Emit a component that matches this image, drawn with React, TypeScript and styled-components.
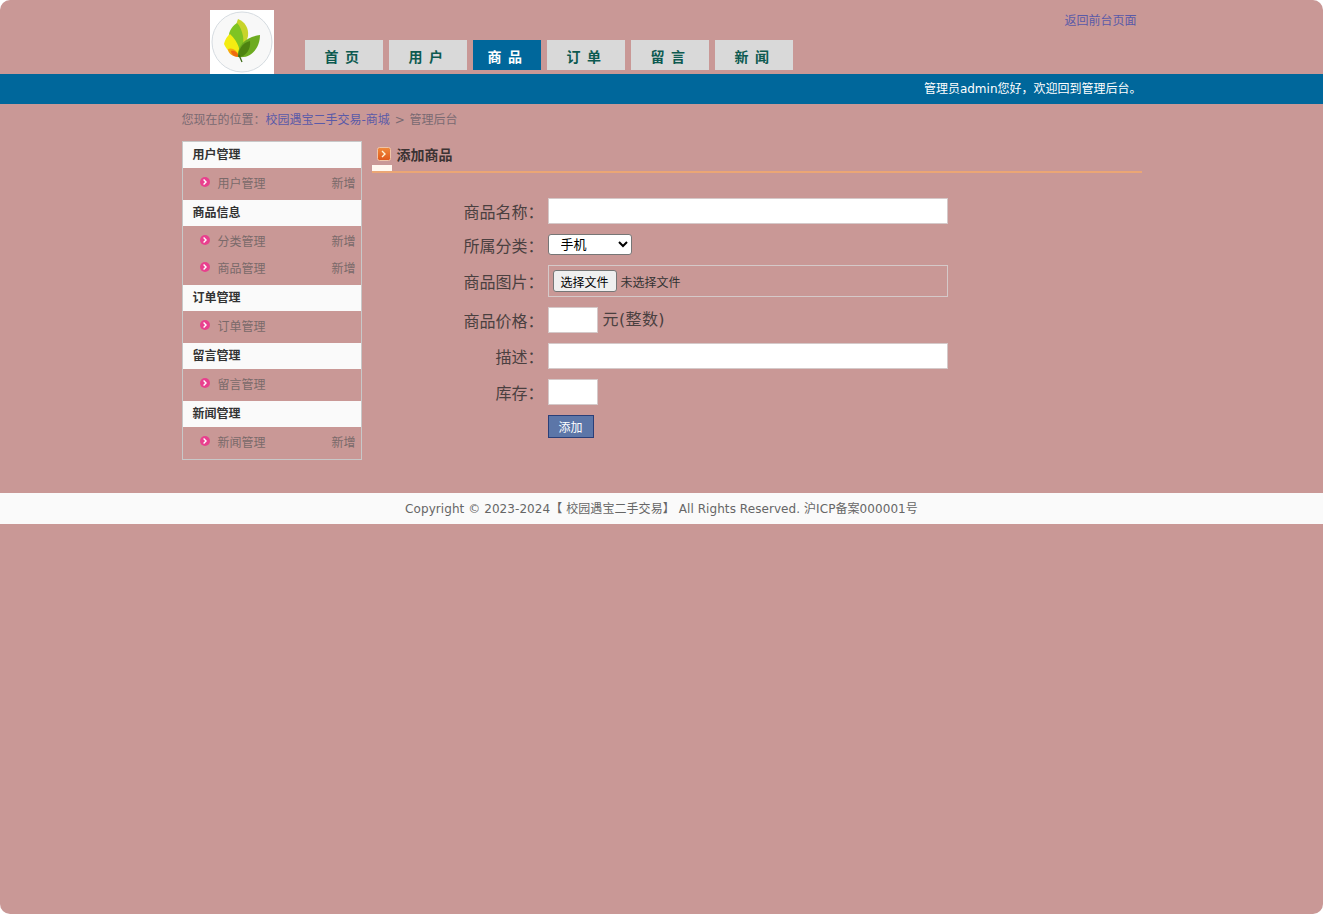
import React from "react";
import styled, { createGlobalStyle } from "styled-components";

const FONT = `"DejaVu Sans", "Noto Sans CJK SC", sans-serif`;

const Global = createGlobalStyle`
  html, body { margin: 0; padding: 0; height: 100%; background: #fff; }
  #root { min-height: 100%; }
  * { box-sizing: border-box; }
`;

const Page = styled.div`
  width: 1323px;
  height: 914px;
  overflow: hidden;
  background: #c99896;
  border-radius: 10px;
  font-family: ${FONT};
  font-size: 12px;
  color: #666;
`;

const Wrap = styled.div`
  width: 960px;
  margin: 0 auto;
`;

const Header = styled(Wrap)`
  height: 74px;
  display: flex;
  align-items: flex-end;
  padding-left: 28px;
  position: relative;
`;

const LogoBox = styled.div`
  width: 64px;
  height: 64px;
  background: #fff;
  display: flex;
`;

const Nav = styled.nav`
  display: flex;
  gap: 6px;
  margin-left: 31px;
  margin-bottom: 4px;
`;

const Tab = styled.a<{ $active?: boolean }>`
  width: ${(p) => (p.$active ? 68 : 78)}px;
  height: 30px;
  display: flex;
  align-items: center;
  justify-content: center;
  padding: 2px 2px 0 0;
  background: ${(p) => (p.$active ? "#00679b" : "#d9d9d9")};
  color: ${(p) => (p.$active ? "#fff" : "#0d5a50")};
  font-size: 14px;
  font-weight: bold;
  letter-spacing: 1.5px;
  word-spacing: -1.5px;
`;

const BackLink = styled.a`
  position: absolute;
  right: 5px;
  top: 11px;
  color: #5a5aa8;
  font-size: 12px;
`;

const Bar = styled.div`
  height: 30px;
  background: #00679b;
`;

const BarInner = styled(Wrap)`
  height: 30px;
  line-height: 31px;
  text-align: right;
  color: #fff;
  font-size: 12px;
`;

const Crumb = styled(Wrap)`
  height: 37px;
  padding-top: 8px;
  line-height: 16px;
  color: #7a6a72;
  word-spacing: 1px;
`;

const CrumbLink = styled.a`
  color: #5a5aa8;
`;

const Main = styled(Wrap)`
  display: flex;
  gap: 10px;
  align-items: flex-start;
`;

const Side = styled.aside`
  width: 180px;
  height: 319px;
  border: 1px solid #c8c8c8;
`;

const SideTitle = styled.div`
  height: 26px;
  line-height: 26px;
  padding-left: 10px;
  background: #fafafa;
  color: #333;
  font-weight: bold;
`;

const SideGroup = styled.div`
  padding: 1px 0 4px;
`;

const SideItem = styled.div`
  height: 27px;
  display: flex;
  align-items: center;
  padding-left: 17px;
  padding-right: 5px;
  color: #7a6a6a;
`;

const BulletSlot = styled.span`
  display: flex;
  margin-top: -1px;
`;

const SideLabel = styled.span`
  margin-left: 8px;
  flex: 1;
`;

const SideAdd = styled.span``;

const Content = styled.section`
  width: 770px;
`;

const ContentHead = styled.div`
  height: 32px;
  display: flex;
  align-items: center;
  padding-left: 5px;
  padding-bottom: 4px;
  border-bottom: 2px solid #eba675;
  position: relative;
  color: #3b3333;
  font-size: 14px;
  font-weight: bold;
`;

const HeadText = styled.span`
  margin-left: 6px;
`;

const WhiteTick = styled.span`
  position: absolute;
  left: 0;
  bottom: 0;
  width: 20px;
  height: 6px;
  background: #fff8f0;
`;

const Form = styled.form`
  padding-top: 25px;
  display: flex;
  flex-direction: column;
`;

const Row = styled.div<{ $h: number }>`
  display: grid;
  grid-template-columns: 172px 1fr;
  column-gap: 4px;
  height: ${(p) => p.$h}px;
  align-items: center;
`;

const Label = styled.label`
  text-align: right;
  font-size: 16px;
  color: #4a4040;
  white-space: nowrap;
`;

const Control = styled.div`
  display: flex;
  align-items: center;
`;

const Input = styled.input<{ $w: number }>`
  width: ${(p) => p.$w}px;
  height: 26px;
  border: 1px solid #d5c9c9;
  background: #fff;
  padding: 0;
  outline: none;
`;

const Select = styled.select`
  width: 84px;
  height: 21px;
  font-family: ${FONT};
  font-size: 13px;
  padding-left: 8px;
  background: #fff;
  border: 1px solid #767676;
  border-radius: 3px;
  color: #000;
`;

const FileBox = styled.div`
  width: 400px;
  height: 32px;
  border: 1px solid #d5c9c9;
  display: flex;
  align-items: center;
  padding-left: 4px;
  color: #333;
`;

const FileButton = styled.button`
  width: 64px;
  height: 22px;
  padding: 0;
  font-family: ${FONT};
  font-size: 12px;
  color: #000;
  background: #efefef;
  border: 1px solid #767676;
  border-radius: 3px;
  margin-right: 4px;
`;

const Unit = styled.span`
  font-size: 16px;
  color: #4a4040;
  margin-left: 5px;
  margin-top: -4px;
  letter-spacing: 0.4px;
`;

const Submit = styled.button`
  width: 46px;
  height: 23px;
  padding: 0;
  background: #5c76a8;
  border: 1px solid #2a3f78;
  color: #fff;
  font-family: ${FONT};
  font-size: 12px;
`;

const Footer = styled.footer`
  margin-top: 33px;
  height: 31px;
  line-height: 32px;
  background: #fafafa;
  text-align: center;
  color: #666;
  font-size: 12px;
  letter-spacing: 0.07px;
`;

const Logo = () => (
  <svg width="64" height="64" viewBox="0 0 64 64">
    <ellipse cx="32" cy="32" rx="30" ry="30" fill="#f8f8f8" stroke="#d5dbe0" />
    <path d="M28 9C35 12 39 18 38 26C37 31 35 35 32 38C26 30 24 18 28 9Z" fill="#c8d42a" />
    <path d="M27 13C21 17 18 23 19 29C20 36 25 42 29 46C33 40 34 32 33 26C32 21 30 16 27 13Z" fill="#7fc423" />
    <path d="M20 24C16 27 15 31 14 34C17 41 23 46 29 47C31 41 29 33 20 24Z" fill="#f4ec12" />
    <path d="M29 47C22 47 18 43 18 39C23 37 28 41 29 47Z" fill="#f6a60f" />
    <path d="M29 47C24 47 21 44 21 41C25 40 28 43 29 47Z" fill="#ef6a10" />
    <path d="M28 47C27 36 35 27 50 25C50 37 42 49 28 47Z" fill="#6dab20" />
    <path d="M28 47C28 40 32 33 40 31C41 39 36 47 28 47Z" fill="#4e8310" />
    <path d="M29 45L32 52" stroke="#3d6a16" strokeWidth="1.3" fill="none" />
  </svg>
);

const Bullet = () => (
  <svg width="10" height="10" viewBox="0 0 10 10">
    <circle cx="5" cy="5" r="5" fill="#e8408e" />
    <path d="M3.6 2.6 6 5 3.6 7.4" stroke="#fff" strokeWidth="1.4" fill="none" />
  </svg>
);

const HeadIcon = () => (
  <svg width="14" height="14" viewBox="0 0 14 14">
    <defs>
      <linearGradient id="headIconFill" x1="0" y1="0" x2="0" y2="1">
        <stop offset="0" stopColor="#f08a3c" />
        <stop offset="1" stopColor="#e0581a" />
      </linearGradient>
    </defs>
    <rect x="0.5" y="0.5" width="13" height="13" rx="2" fill="url(#headIconFill)" stroke="#efc4a8" />
    <path d="M5 4 8 7 5 10" stroke="#fff6d8" strokeWidth="1.4" fill="none" />
  </svg>
);

const groups: { title: string; items: [string, boolean][] }[] = [
  { title: "用户管理", items: [["用户管理", true]] },
  { title: "商品信息", items: [["分类管理", true], ["商品管理", true]] },
  { title: "订单管理", items: [["订单管理", false]] },
  { title: "留言管理", items: [["留言管理", false]] },
  { title: "新闻管理", items: [["新闻管理", true]] },
];

const tabs = ["首 页", "用 户", "商 品", "订 单", "留 言", "新 闻"];

export default function App() {
  return (
    <Page>
      <Global />
      <Header>
        <LogoBox>
          <Logo />
        </LogoBox>
        <Nav>
          {tabs.map((t, i) => (
            <Tab key={t} $active={i === 2}>
              {t}
            </Tab>
          ))}
        </Nav>
        <BackLink>返回前台页面</BackLink>
      </Header>
      <Bar>
        <BarInner>管理员admin您好，欢迎回到管理后台。</BarInner>
      </Bar>
      <Crumb>
        您现在的位置：<CrumbLink>校园遇宝二手交易-商城</CrumbLink> &gt; 管理后台
      </Crumb>
      <Main>
        <Side>
          {groups.map((g) => (
            <div key={g.title}>
              <SideTitle>{g.title}</SideTitle>
              <SideGroup>
                {g.items.map(([label, add]) => (
                  <SideItem key={label}>
                    <BulletSlot>
                      <Bullet />
                    </BulletSlot>
                    <SideLabel>{label}</SideLabel>
                    {add && <SideAdd>新增</SideAdd>}
                  </SideItem>
                ))}
              </SideGroup>
            </div>
          ))}
        </Side>
        <Content>
          <ContentHead>
            <HeadIcon />
            <HeadText>添加商品</HeadText>
            <WhiteTick />
          </ContentHead>
          <Form>
            <Row $h={26}>
              <Label>商品名称：</Label>
              <Control>
                <Input $w={400} />
              </Control>
            </Row>
            <Row $h={41}>
              <Label>所属分类：</Label>
              <Control>
                <Select defaultValue="手机">
                  <option>手机</option>
                </Select>
              </Control>
            </Row>
            <Row $h={32}>
              <Label>商品图片：</Label>
              <Control>
                <FileBox>
                  <FileButton type="button">选择文件</FileButton>
                  未选择文件
                </FileBox>
              </Control>
            </Row>
            <Row $h={46}>
              <Label>商品价格：</Label>
              <Control>
                <Input $w={50} />
                <Unit>元(整数)</Unit>
              </Control>
            </Row>
            <Row $h={26}>
              <Label>描述：</Label>
              <Control>
                <Input $w={400} />
              </Control>
            </Row>
            <Row $h={46}>
              <Label>库存：</Label>
              <Control>
                <Input $w={50} />
              </Control>
            </Row>
            <Row $h={23}>
              <span />
              <Control>
                <Submit type="button">添加</Submit>
              </Control>
            </Row>
          </Form>
        </Content>
      </Main>
      <Footer>Copyright © 2023-2024【 校园遇宝二手交易】 All Rights Reserved. 沪ICP备案000001号</Footer>
    </Page>
  );
}
